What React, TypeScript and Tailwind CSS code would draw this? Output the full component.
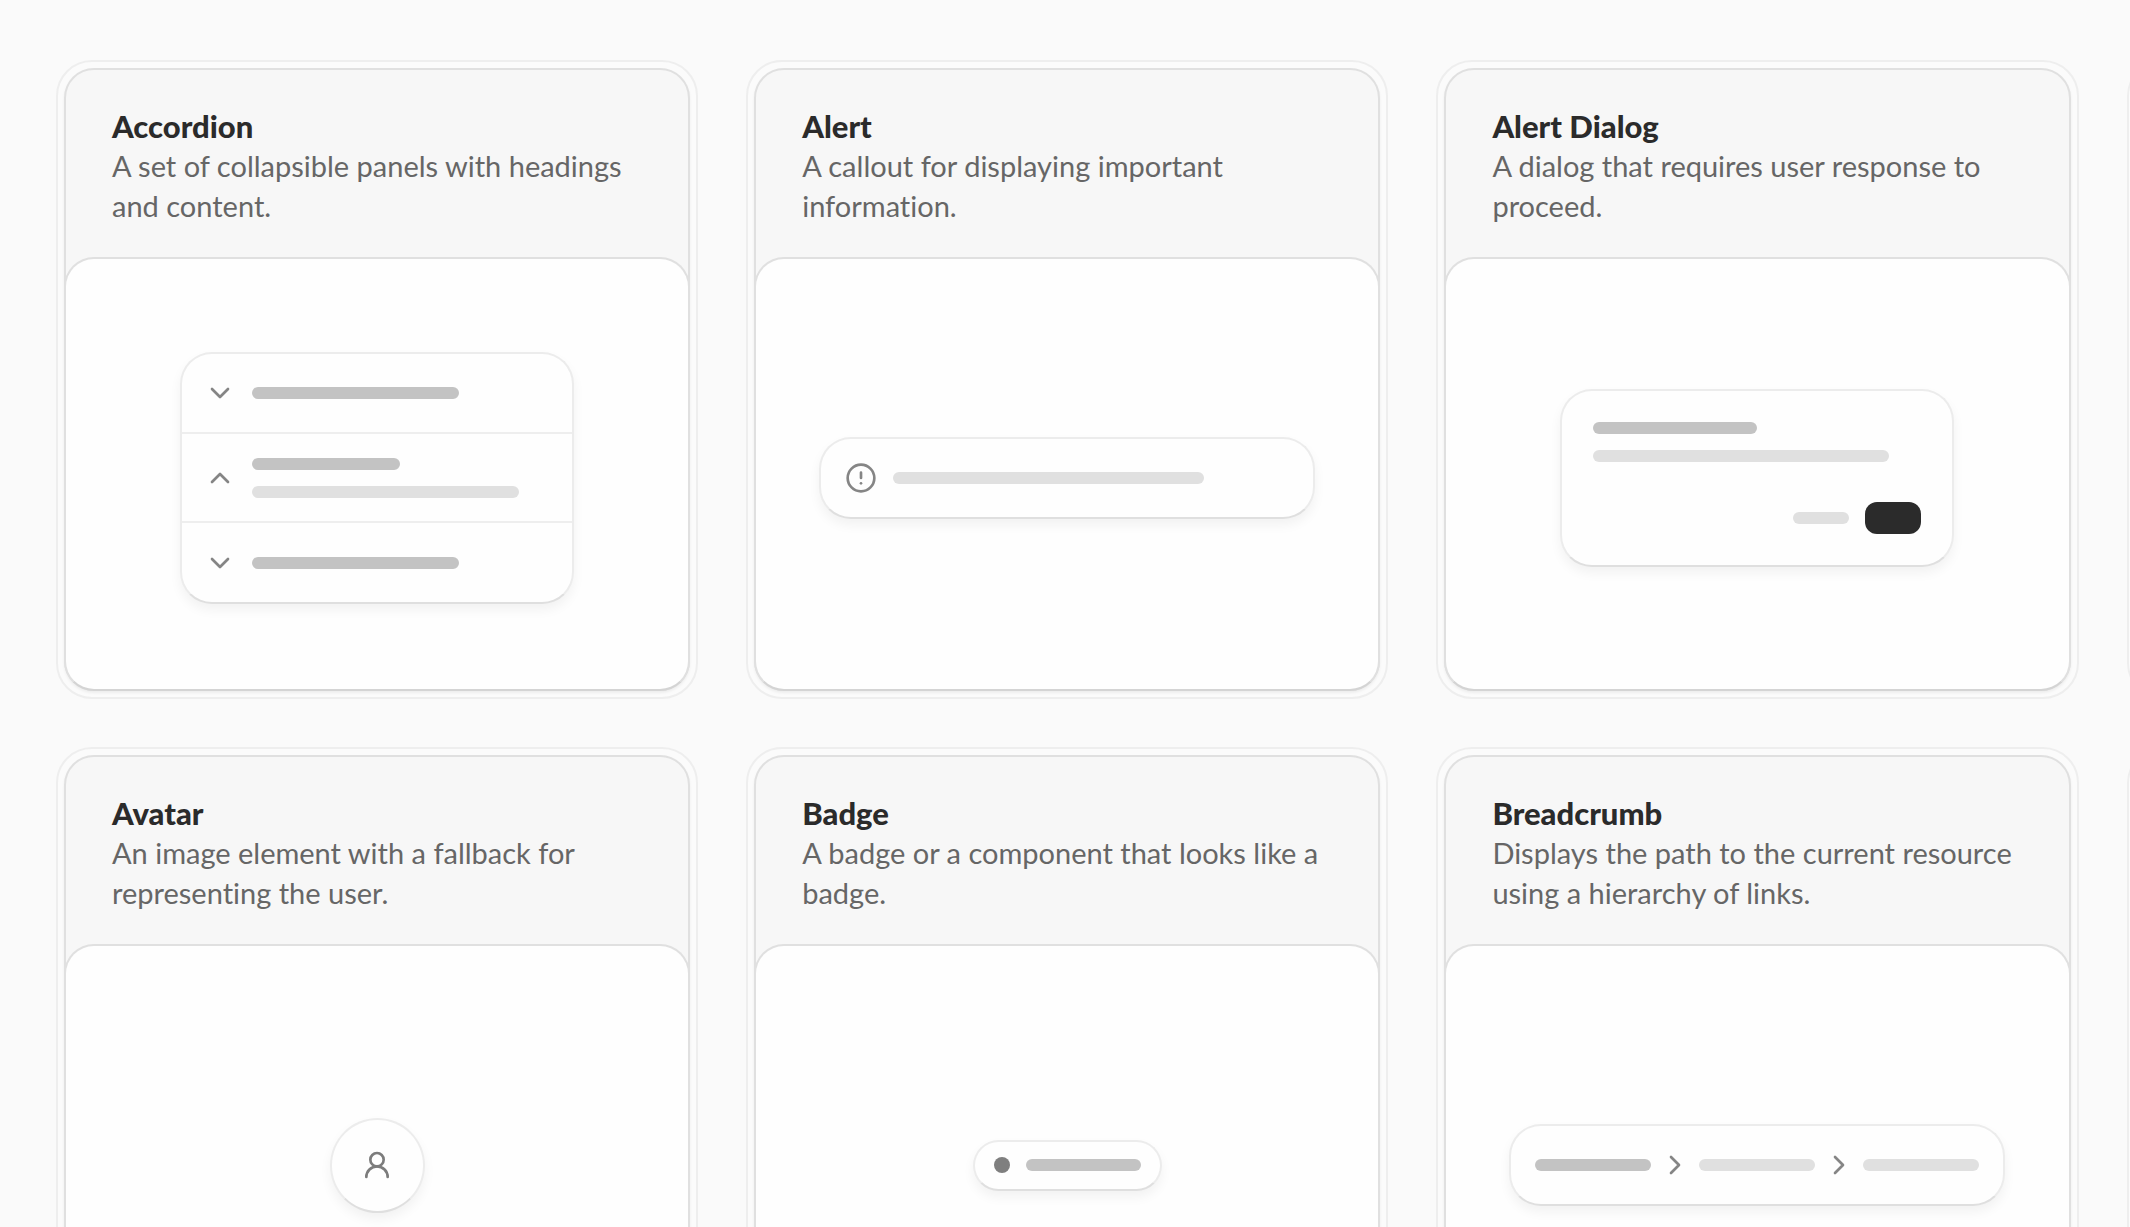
import type { ReactNode } from "react";
import {
  ChevronDown,
  ChevronRight,
  ChevronUp,
  CircleAlert,
  UserRound,
} from "lucide-react";

const surface =
  "border-2 border-[#ececec] border-b-[#dfdfdf] bg-[#fefefe] bg-clip-padding shadow-[0_6px_12px_rgba(0,0,0,0.05)]";

function Bar({ className, strong = false }: { className: string; strong?: boolean }) {
  return (
    <div className={`h-3 rounded-full ${strong ? "bg-[#c3c3c3]" : "bg-[#e0e0e0]"} ${className}`} />
  );
}

function AccordionPreview() {
  return (
    <div className={`w-[394px] divide-y-2 divide-[#eeeeee] rounded-[32px] ${surface}`}>
      <div className="flex h-20 items-center gap-4 px-[22px]">
        <ChevronDown className="size-8 text-[#858585]" />
        <Bar strong className="w-[207px]" />
      </div>
      <div className="flex h-[89px] items-center gap-4 px-[22px]">
        <ChevronUp className="size-8 text-[#858585]" />
        <div className="flex flex-col gap-4">
          <Bar strong className="w-[148px]" />
          <Bar className="w-[267px]" />
        </div>
      </div>
      <div className="flex h-[79px] items-center gap-4 px-[22px]">
        <ChevronDown className="size-8 text-[#858585]" />
        <Bar strong className="w-[207px]" />
      </div>
    </div>
  );
}

function AlertPreview() {
  return (
    <div className={`flex h-[82px] w-[496px] items-center gap-4 rounded-[32px] px-6 ${surface}`}>
      <CircleAlert className="size-8 text-[#858585]" />
      <Bar className="w-[311px]" />
    </div>
  );
}

function AlertDialogPreview() {
  return (
    <div className={`w-[394px] rounded-[32px] p-[31px] ${surface}`}>
      <div className="flex flex-col gap-4">
        <Bar strong className="w-[164px]" />
        <Bar className="w-[296px]" />
      </div>
      <div className="mt-10 flex items-center justify-end gap-4">
        <Bar className="w-14" />
        <div className="h-8 w-14 rounded-xl bg-[#2b2b2b]" />
      </div>
    </div>
  );
}

function AvatarPreview() {
  return (
    <div className={`flex size-[95px] items-center justify-center rounded-full ${surface}`}>
      <UserRound className="size-8 text-[#7c7c7c]" />
    </div>
  );
}

function BadgePreview() {
  return (
    <div className={`flex h-[51px] items-center gap-4 rounded-full px-[19px] ${surface}`}>
      <div className="size-4 rounded-full bg-[#7f7f7f]" />
      <Bar strong className="w-[115px]" />
    </div>
  );
}

function BreadcrumbPreview() {
  return (
    <div className={`flex h-[82px] w-[496px] items-center gap-2 rounded-[32px] px-6 ${surface}`}>
      <Bar strong className="flex-1" />
      <ChevronRight className="size-8 text-[#858585]" />
      <Bar className="flex-1" />
      <ChevronRight className="size-8 text-[#858585]" />
      <Bar className="flex-1" />
    </div>
  );
}

type CardProps = { title?: string; description?: string; children?: ReactNode };

function Card({ title, description, children }: CardProps) {
  return (
    <article className="rounded-[36px] border-2 border-[#eeeeee] bg-[#fbfbfb] p-1.5">
      <a
        href="#"
        className="flex h-full flex-col rounded-[30px] border-2 border-[#e0e0e0] bg-[#f7f7f7] shadow-[0_2px_3px_rgba(0,0,0,0.06)]"
      >
        <div className="h-[187px] px-[46px] pt-9">
          <h2 className="text-[31px] leading-10 font-black text-[#2b2b2b]">{title}</h2>
          <p className="text-[29px] leading-10 text-[#666666] [font-variant-ligatures:none]">
            {description}
          </p>
        </div>
        <div className="-mx-0.5 -mb-0.5 flex h-[434px] items-center justify-center rounded-[30px] border-2 border-[#e0e0e0] border-b-[#d4d4d4] bg-[#fefefe] pt-2">
          {children}
        </div>
      </a>
    </article>
  );
}

const cards: CardProps[] = [
  {
    title: "Accordion",
    description: "A set of collapsible panels with headings and content.",
    children: <AccordionPreview />,
  },
  {
    title: "Alert",
    description: "A callout for displaying important information.",
    children: <AlertPreview />,
  },
  {
    title: "Alert Dialog",
    description: "A dialog that requires user response to proceed.",
    children: <AlertDialogPreview />,
  },
  {},
  {
    title: "Avatar",
    description: "An image element with a fallback for representing the user.",
    children: <AvatarPreview />,
  },
  {
    title: "Badge",
    description: "A badge or a component that looks like a badge.",
    children: <BadgePreview />,
  },
  {
    title: "Breadcrumb",
    description: "Displays the path to the current resource using a hierarchy of links.",
    children: <BreadcrumbPreview />,
  },
  {},
];

export default function App() {
  return (
    <main className="h-screen overflow-hidden bg-[#fafafa] pt-[60px] pl-14 font-['Lato',sans-serif]">
      <div className="grid grid-cols-[repeat(4,30.15vw)] gap-12">
        {cards.map((card, i) => (
          <Card key={i} {...card} />
        ))}
      </div>
    </main>
  );
}
